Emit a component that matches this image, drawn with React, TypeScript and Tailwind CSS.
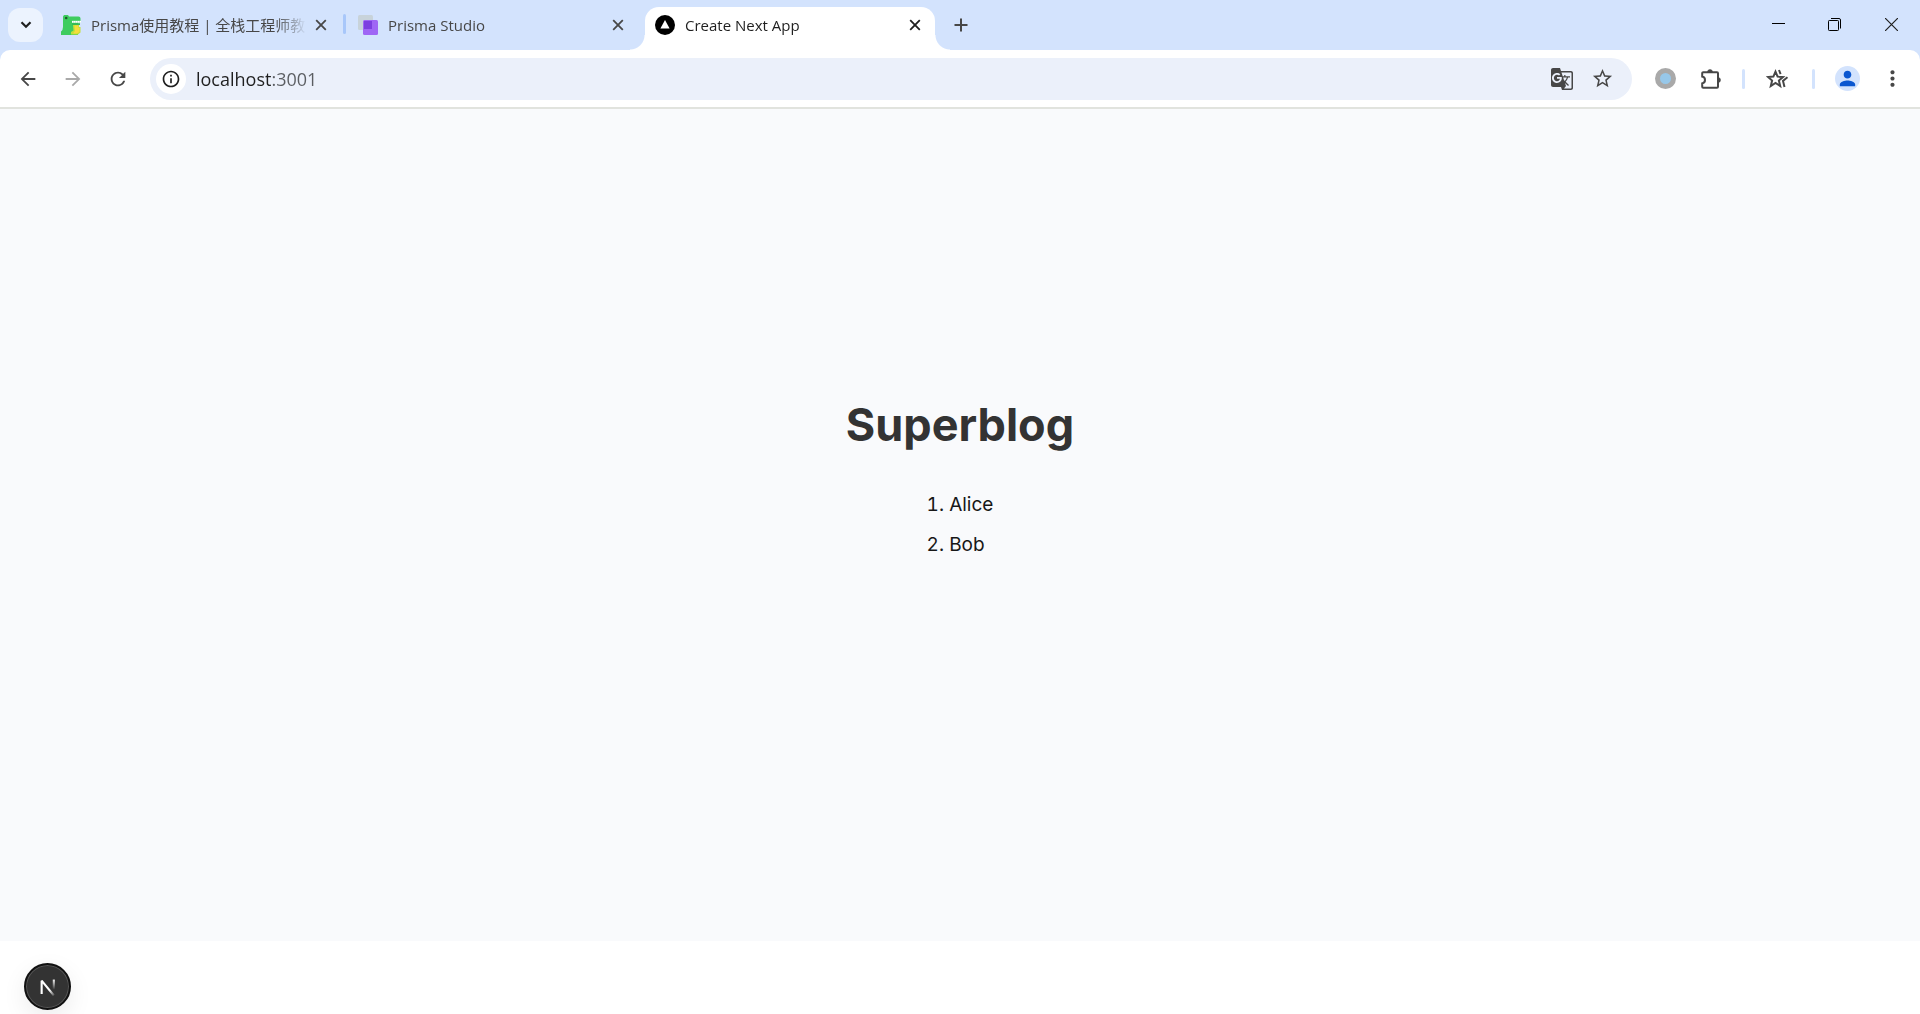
import type { ReactNode } from 'react';
import {
  MdArrowBack,
  MdArrowForward,
  MdGTranslate,
  MdInfoOutline,
  MdMoreVert,
  MdPerson,
  MdRefresh,
  MdStarBorder,
} from 'react-icons/md';

const uiFont = "font-['Open_Sans','Noto_Sans_CJK_SC',sans-serif]";

function CloseIcon() {
  return (
    <svg width="12" height="12" viewBox="0 0 12 12" fill="none" stroke="currentColor" strokeWidth="1.8">
      <path d="M1.2 1.2 10.8 10.8M10.8 1.2 1.2 10.8" />
    </svg>
  );
}

function CrocodileIcon() {
  return (
    <svg width="20" height="20" viewBox="0 0 20 20">
      <path d="M3 0h4l1 1.500h9.500a2 2 0 0 1 2 2V7L17 8.500V20H0v-3.500Q2 15 2 12V1.500z" fill="#3ecc5f" />
      <path d="M11 5.800h9v2h-9z" fill="#c9f0d2" />
      <path d="M11 6.800h9" stroke="#fff" strokeWidth="1.600" strokeDasharray="1.200 .8" />
      <path d="M11 8.200h8V10h-8z" fill="#35b957" />
      <circle cx="5.200" cy="3" r="1.300" fill="#1c5a2d" />
      <path d="M12 10h6v2h1.500v5.500L17 19.500h-7V17l2.500-1.500z" fill="#c3e038" />
      <path d="M13.500 10.500h4v2.500h1v4L16 18.500h-4l2-2.500z" fill="#f5dd3c" />
    </svg>
  );
}

function PrismaStudioIcon() {
  return (
    <svg width="20" height="20" viewBox="0 0 20 20">
      <rect width="15" height="15" rx="1.500" fill="#c8d3da" />
      <rect x="5" y="5" width="15" height="15" rx="1.500" fill="#9f66f5" />
      <rect x="6" y="6" width="8" height="8" fill="#7c3fe0" />
    </svg>
  );
}

function TriangleIcon() {
  return (
    <svg width="20" height="20" viewBox="0 0 20 20">
      <circle cx="10" cy="10" r="10" fill="#000" />
      <path d="M10 5 14.600 13.600H5.400z" fill="#fff" />
    </svg>
  );
}

function PuzzleIcon() {
  return (
    <svg width="22" height="22" viewBox="0 0 22 22" fill="none">
      <path
        d="M3.200 4.200H17a1 1 0 0 1 1 1V18.800a1 1 0 0 1-1 1H3.200a1 1 0 0 1-1-1V15.400Q5 14.800 5 12T2.200 8.600V5.200a1 1 0 0 1 1-1z"
        stroke="#474747"
        strokeWidth="2"
      />
      <path d="M7.500 4a2.500 2.500 0 0 1 5 0zM18 9.500a2.500 2.500 0 0 1 0 5z" fill="#474747" stroke="#474747" strokeWidth=".5" />
    </svg>
  );
}

function StarStackIcon() {
  return (
    <svg width="22" height="20" viewBox="0 0 22 20" fill="none" stroke="#474747" strokeWidth="2">
      <path d="M9.500 2.600 11.600 7.600 17 8 12.900 11.500 14.200 17 9.500 14 4.800 17 6.100 11.500 2 8 7.400 7.600z" />
      <path d="M13 1 14.600 5.200M21.500 8.200 17 11.900 18.500 18" />
    </svg>
  );
}

function Separator({ hidden = false }: { hidden?: boolean }) {
  return <span className={`mx-[2px] mt-[7px] h-5 w-[3px] shrink-0 rounded-full ${hidden ? '' : 'bg-[#a8c7fa]'}`} />;
}

function Tab({ icon, title, active = false }: { icon: ReactNode; title: string; active?: boolean }) {
  return (
    <div
      className={`relative flex h-[43px] w-[290px] min-w-0 items-center pr-[10px] pb-4 pl-[10px] pt-2 ${
        active
          ? 'rounded-t-[14px] bg-white text-[#1f1f1f] before:absolute before:bottom-0 before:right-full before:size-[15px] before:bg-[radial-gradient(circle_at_0_0,transparent_14px,white_15px)] after:absolute after:bottom-0 after:left-full after:size-[15px] after:bg-[radial-gradient(circle_at_100%_0,transparent_14px,white_15px)]'
          : 'text-[#474747]'
      }`}
    >
      <button type="button" role="tab" aria-selected={active} className="mr-1 flex min-w-0 flex-1 items-center gap-[10px] text-left">
        <span className="shrink-0">{icon}</span>
        <span className="flex-1 overflow-hidden text-[15px] leading-5 whitespace-nowrap [mask-image:linear-gradient(to_right,black_calc(100%-32px),transparent)]">
          {title}
        </span>
      </button>
      <button type="button" aria-label={`Close ${title}`} className="flex size-5 shrink-0 items-center justify-center">
        <CloseIcon />
      </button>
    </div>
  );
}

function TabStrip() {
  return (
    <div className="flex h-[50px] shrink-0 items-start bg-[#d3e3fd] pl-2">
      <button type="button" aria-label="Search tabs" className="mt-2 mr-2 flex h-[34px] w-[35px] shrink-0 items-center justify-center rounded-xl bg-[#ecf3fe]">
        <svg width="12" height="8" viewBox="0 0 12 8" fill="none" stroke="#1f1f1f" strokeWidth="2.200">
          <path d="m1.500 1.300 4.500 4.500 4.500-4.500" />
        </svg>
      </button>
      <div role="tablist" className="mt-[7px] flex min-w-0">
        <Tab icon={<CrocodileIcon />} title="Prisma使用教程 | 全栈工程师教" />
        <Separator />
        <Tab icon={<PrismaStudioIcon />} title="Prisma Studio" />
        <Separator hidden />
        <Tab icon={<TriangleIcon />} title="Create Next App" active />
      </div>
      <button type="button" aria-label="New tab" className="mt-[10px] ml-[11px] flex size-[30px] shrink-0 items-center justify-center">
        <svg width="14" height="14" viewBox="0 0 14 14" stroke="#474747" strokeWidth="2">
          <path d="M.5 7h13M7 .5v13" />
        </svg>
      </button>
      <div className="ml-auto flex shrink-0">
        <button type="button" aria-label="Minimize" className="flex h-12 w-14 items-center justify-center">
          <svg width="13" height="13" viewBox="0 0 13 13" stroke="#000">
            <path d="M0 5.500h13" />
          </svg>
        </button>
        <button type="button" aria-label="Restore" className="flex h-12 w-14 items-center justify-center">
          <svg width="13" height="13" viewBox="0 0 13 13" fill="none" stroke="#000">
            <rect x=".5" y="2.500" width="10" height="10" rx=".8" />
            <path d="M3 .5h8a1.500 1.500 0 0 1 1.500 1.500v8.500" />
          </svg>
        </button>
        <button type="button" aria-label="Close window" className="flex h-12 w-[58px] items-center justify-center">
          <svg width="13" height="13" viewBox="0 0 13 13" stroke="#1f1f1f" strokeWidth="1.200">
            <path d="M0 0 13 13M13 0 0 13" />
          </svg>
        </button>
      </div>
    </div>
  );
}

function IconButton({ label, children }: { label: string; children: ReactNode }) {
  return (
    <button type="button" aria-label={label} className="flex size-10 shrink-0 items-center justify-center">
      {children}
    </button>
  );
}

function Toolbar() {
  return (
    <div className="shrink-0 bg-[#d3e3fd]">
      <div className="flex h-[59px] items-center rounded-t-[10px] border-b-2 border-[#e1e3de] bg-white pr-2 pl-2 text-[#474747]">
        <div className="mr-3 flex gap-[5px]">
          <IconButton label="Back"><MdArrowBack size={22} /></IconButton>
          <IconButton label="Forward"><MdArrowForward size={22} color="#a9a9a9" /></IconButton>
          <IconButton label="Reload"><MdRefresh size={22} /></IconButton>
        </div>
        <div className="flex h-[42px] min-w-0 flex-1 items-center rounded-full bg-[#ebf0fa] pr-[10px] pl-[6px]">
          <button type="button" aria-label="View site information" className="flex size-[30px] shrink-0 items-center justify-center rounded-full bg-white text-[#1f1f1f]">
            <MdInfoOutline size={20} />
          </button>
          <input
            type="text"
            aria-label="Address"
            defaultValue="localhost:3001"
            className="ml-[10px] min-w-0 flex-1 bg-[linear-gradient(to_right,#1f1f1f_76px,#5a5d61_76px)] bg-clip-text text-[18px] leading-7 text-transparent outline-none"
          />
          <IconButton label="Translate this page"><MdGTranslate size={24} /></IconButton>
          <IconButton label="Bookmark this tab"><MdStarBorder size={23} /></IconButton>
        </div>
        <div className="ml-[13px] flex items-center">
          <IconButton label="Extension"><span className="size-[21px] rounded-full border-[5px] border-[#a9a9a9] bg-[#97c8ea]" /></IconButton>
          <span className="ml-[6px] flex"><IconButton label="Extensions"><PuzzleIcon /></IconButton></span>
          <span className="mr-3 ml-[11px] h-5 w-[3px] rounded-full bg-[#d3e3fd]" />
          <IconButton label="Bookmarks"><StarStackIcon /></IconButton>
          <span className="mr-3 ml-[15px] h-5 w-[3px] rounded-full bg-[#d3e3fd]" />
          <IconButton label="Profile">
            <span className="flex size-[25px] items-center justify-center rounded-full bg-[#d3e3fd] text-[#0b57d0]"><MdPerson size={23} /></span>
          </IconButton>
          <span className="ml-[5px] flex"><IconButton label="Menu"><MdMoreVert size={25} /></IconButton></span>
        </div>
      </div>
    </div>
  );
}

function DevBadge() {
  return (
    <button
      type="button"
      aria-label="Open Next.js Dev Tools"
      className="fixed bottom-1 left-6 flex size-[47px] items-center justify-center rounded-full border-2 border-[#111] bg-[#333] shadow-[0_8px_24px_rgba(0,0,0,0.08)] inset-ring inset-ring-[#555]"
    >
      <svg width="18" height="18" viewBox="0 0 16 17" fill="none" strokeWidth="2">
        <defs>
          <linearGradient id="stem" x1="0" y1="1" x2="0" y2="11" gradientUnits="userSpaceOnUse">
            <stop stopColor="#fff" />
            <stop offset="1" stopColor="#fff" stopOpacity="0" />
          </linearGradient>
          <linearGradient id="diagonal" x1="10" y1="11" x2="15" y2="17" gradientUnits="userSpaceOnUse">
            <stop stopColor="#fff" />
            <stop offset="1" stopColor="#fff" stopOpacity="0" />
          </linearGradient>
        </defs>
        <path d="M2 15V2.500L13.500 16.500" stroke="url(#diagonal)" strokeLinejoin="bevel" />
        <path d="M13.500 1.500v10" stroke="url(#stem)" />
      </svg>
    </button>
  );
}

export default function App() {
  return (
    <div className={`flex min-h-screen flex-col bg-white ${uiFont}`}>
      <TabStrip />
      <Toolbar />
      <main className="mb-[73px] flex flex-1 flex-col items-center justify-center bg-[#f9fafc] pb-[90px] font-['Inter',sans-serif]">
        <h1 className="mb-10 text-[45px] leading-[50px] font-bold text-[#333333]">Superblog</h1>
        <ol className="list-inside list-decimal space-y-[10px] text-[19px] leading-[30px] text-[#171717]">
          <li>Alice</li>
          <li>Bob</li>
        </ol>
      </main>
      <DevBadge />
    </div>
  );
}
